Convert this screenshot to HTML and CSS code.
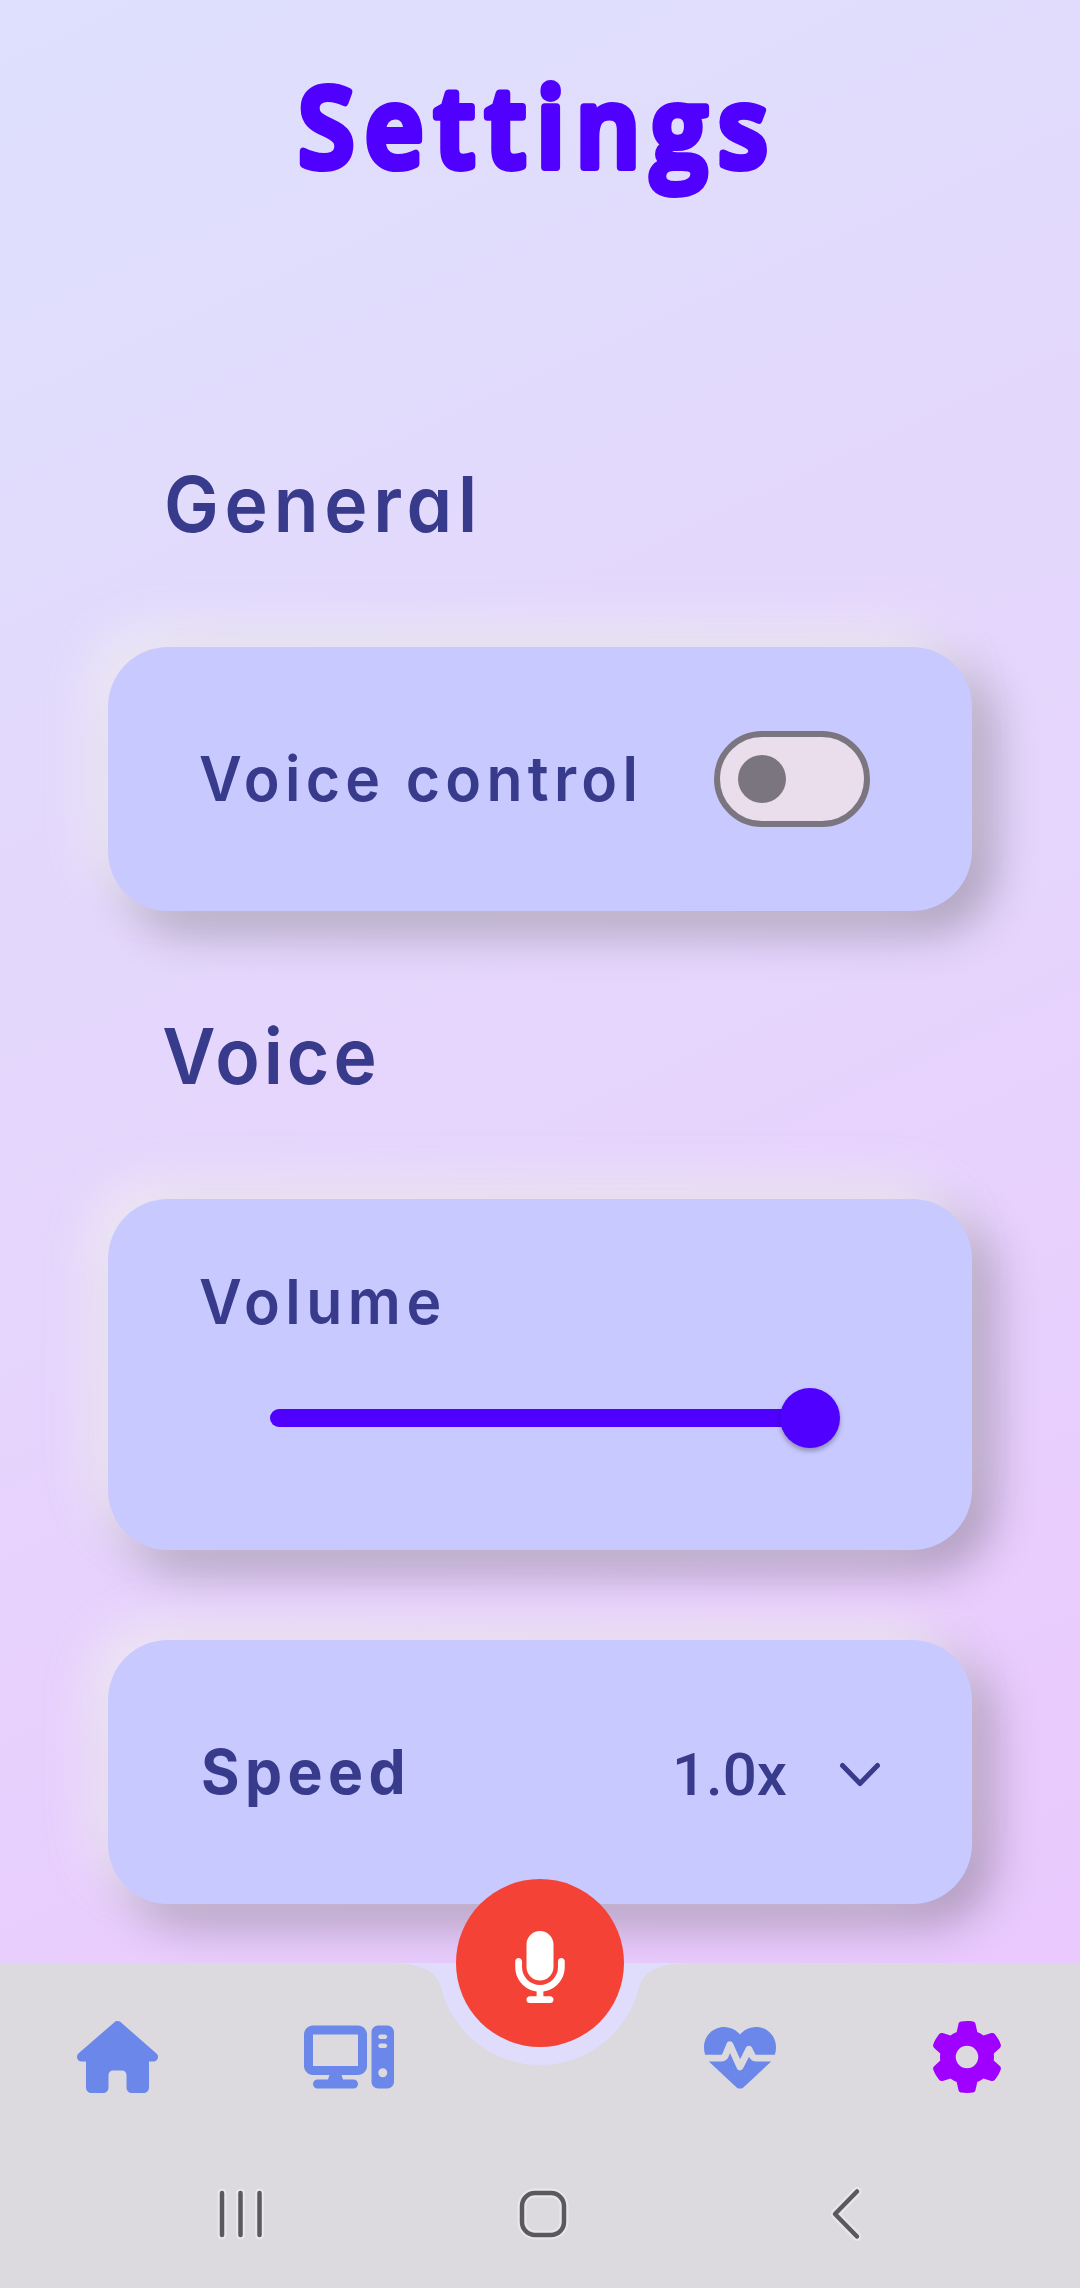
FILE: index.html
```html
<!DOCTYPE html>
<html lang="en">
<head>
<meta charset="utf-8">
<title>Settings</title>
<link rel="stylesheet" href="styles.css">
</head>
<body>
<div class="screen">
  <main class="content">
    <h1 class="title">
      <svg class="title-art" width="520" height="190" viewBox="0 0 520 190"><text class="title-text" x="20" y="147" transform="scale(.92 1)">Settings</text></svg>
    </h1>

    <h2 class="section general">General</h2>
    <section class="card row">
      <span class="label control-label">Voice control</span>
      <span class="switch" role="switch" aria-checked="false"><span class="switch-thumb"></span></span>
    </section>

    <h2 class="section voice">Voice</h2>
    <section class="card volume">
      <span class="label volume-label">Volume</span>
      <div class="slider"><span class="slider-thumb"></span></div>
    </section>
    <section class="card row speed">
      <span class="label speed-label">Speed</span>
      <span class="select">
        <span class="select-value">1.0x</span>
        <svg width="48" height="36" viewBox="0 0 48 36"><path d="M6.500 8.500L24 26.500L41.500 8.500" fill="none" stroke="#383b8b" stroke-width="5" stroke-linecap="round" stroke-linejoin="round"/></svg>
      </span>
    </section>
  </main>

  <nav class="tabs">
    <svg class="tabs-shape" width="1080" height="325" viewBox="0 0 1080 325"><path fill="#dcd9df" d="M0 0H390Q435 0 440.900 24.200A102 102 0 0 0 639.100 24.200Q645 0 690 0H1080V325H0Z"/></svg>
    <button class="mic" aria-label="Microphone">
      <svg width="54" height="72" viewBox="0 0 384 512"><path fill="#fff" d="M192 0C139 0 96 43 96 96V256c0 53 43 96 96 96s96-43 96-96V96c0-53-43-96-96-96zM64 216c0-13.300-10.700-24-24-24s-24 10.700-24 24v40c0 89.100 66.200 162.700 152 174.400V464H120c-13.300 0-24 10.700-24 24s10.700 24 24 24h144c13.300 0 24-10.700 24-24s-10.700-24-24-24H216V430.400c85.800-11.700 152-85.300 152-174.400V216c0-13.300-10.700-24-24-24s-24 10.700-24 24v40c0 70.700-57.300 128-128 128s-128-57.300-128-128V216z"/></svg>
    </button>
    <div class="tab-row">
      <svg class="tab home" width="81" height="72" viewBox="0 0 576 512"><path d="M575.8 255.5c0 18-15 32.100-32 32.100h-32l.7 160.200c0 2.700-.2 5.400-.5 8.100V472c0 22.100-17.900 40-40 40H392c-22.100 0-40-17.900-40-40V384c0-17.700-14.300-32-32-32H256c-17.700 0-32 14.300-32 32v88c0 22.100-17.900 40-40 40H104c-22.100 0-40-17.900-40-40V287.600H32c-18 0-32-14-32-32.100c0-9 3-17 10-24L266.400 8c7-7 15-8 22-8s15 2 21 7L564.800 231.500c8 7 12 15 11 24z"/></svg>
      <svg class="tab computer" width="90" height="72" viewBox="0 0 640 512"><path d="M384 96V320H64L64 96H384zM64 32C28.700 32 0 60.700 0 96V320c0 35.300 28.700 64 64 64H181.300l-10.700 32H96c-17.700 0-32 14.300-32 32s14.300 32 32 32H352c17.700 0 32-14.300 32-32s-14.300-32-32-32H277.300l-10.700-32H384c35.300 0 64-28.700 64-64V96c0-35.300-28.700-64-64-64H64zm464 0c-26.500 0-48 21.500-48 48V432c0 26.500 21.500 48 48 48h64c26.500 0 48-21.500 48-48V80c0-26.500-21.500-48-48-48H528zm16 64h32c8.800 0 16 7.200 16 16s-7.200 16-16 16H544c-8.800 0-16-7.200-16-16s7.200-16 16-16zm-16 80c0-8.800 7.200-16 16-16h32c8.800 0 16 7.200 16 16s-7.200 16-16 16H544c-8.800 0-16-7.200-16-16zm32 160a32 32 0 1 1 0 64 32 32 0 1 1 0-64z"/></svg>
      <svg class="tab health" width="72" height="72" viewBox="0 0 512 512"><path d="M228.300 469.100L47.600 300.400c-4.200-3.900-8.200-8.100-11.900-12.400h87c22.600 0 43-13.600 51.700-34.500l10.500-25.200 49.300 109.500c3.800 8.500 12.100 14 21.400 14.100s17.800-5 22-13.300L320 253.700l1.700 3.400c9.500 19 28.900 31 50.100 31H476.300c-3.700 4.300-7.700 8.500-11.900 12.400L283.700 469.100c-7.500 7-17.400 10.900-27.700 10.900s-20.200-3.900-27.700-10.900zM503.700 240h-132c-3 0-5.800-1.700-7.200-4.400l-23.200-46.300c-4.100-8.100-12.400-13.300-21.500-13.300s-17.400 5.100-21.500 13.300l-41.400 82.800L205.900 158.200c-3.900-8.700-12.700-14.300-22.200-14.100s-18.100 5.900-21.800 14.800l-31.800 76.300c-1.200 3-4.200 4.900-7.400 4.900H16c-2.600 0-5 .4-7.300 1.100C3 225.200 0 208.200 0 190.900v-5.800c0-69.900 50.500-129.500 119.400-141C165 36.500 211.400 51.400 244 84l12 12 12-12c32.600-32.600 79-47.500 124.600-39.900C461.500 55.600 512 115.200 512 185.100v5.800c0 16.900-2.800 33.500-8.300 49.100z"/></svg>
      <svg class="tab gear" width="72" height="72" viewBox="0 0 512 512"><path d="M495.900 166.600c3.200 8.700 .5 18.400-6.400 24.600l-43.300 39.400c1.100 8.300 1.700 16.800 1.700 25.400s-.6 17.100-1.700 25.400l43.300 39.400c6.900 6.200 9.600 15.900 6.400 24.600c-4.400 11.900-9.700 23.300-15.800 34.300l-4.700 8.100c-6.600 11-14 21.400-22.100 31.200c-5.900 7.200-15.700 9.600-24.500 6.800l-55.700-17.700c-13.400 10.300-28.200 18.900-44 25.400l-12.500 57.100c-2 9.100-9 16.300-18.200 17.800c-13.800 2.300-28 3.500-42.500 3.500s-28.700-1.200-42.500-3.500c-9.200-1.500-16.200-8.700-18.200-17.800l-12.500-57.100c-15.800-6.500-30.600-15.100-44-25.400L83.100 425.900c-8.800 2.800-18.600 .3-24.500-6.800c-8.100-9.800-15.500-20.200-22.100-31.200l-4.700-8.100c-6.100-11-11.400-22.400-15.800-34.300c-3.200-8.700-.5-18.400 6.400-24.600l43.300-39.400C64.600 273.100 64 264.600 64 256s.6-17.100 1.700-25.400L22.400 191.200c-6.900-6.200-9.600-15.900-6.400-24.600c4.400-11.900 9.700-23.300 15.800-34.300l4.700-8.100c6.600-11 14-21.400 22.100-31.200c5.900-7.200 15.700-9.600 24.500-6.800l55.700 17.700c13.400-10.300 28.200-18.900 44-25.400l12.500-57.100c2-9.100 9-16.300 18.200-17.800C227.300 1.200 241.500 0 256 0s28.700 1.200 42.500 3.500c9.200 1.500 16.200 8.700 18.200 17.800l12.500 57.100c15.800 6.500 30.600 15.100 44 25.400l55.700-17.700c8.800-2.800 18.600-.3 24.500 6.800c8.100 9.800 15.500 20.200 22.100 31.200l4.700 8.100c6.100 11 11.400 22.400 15.800 34.300zM256 336a80 80 0 1 0 0-160 80 80 0 1 0 0 160z"/></svg>
    </div>
    <div class="system-row">
      <svg width="52" height="56" viewBox="0 0 52 56"><g class="halo"><path d="M7 7V49M25.500 7V49M44.500 7V49"/></g><g class="line"><path d="M7 7V49M25.500 7V49M44.500 7V49"/></g></svg>
      <svg width="56" height="56" viewBox="0 0 56 56"><g class="halo"><rect x="7" y="7" width="42" height="42" rx="13"/></g><g class="line"><rect x="7" y="7" width="42" height="42" rx="13"/></g></svg>
      <svg width="38" height="56" viewBox="0 0 38 56"><g class="halo"><path d="M29 5.500L7 28L29 50.500"/></g><g class="line"><path d="M29 5.500L7 28L29 50.500"/></g></svg>
    </div>
  </nav>
</div>
</body>
</html>
```

FILE: styles.css
```css
* { box-sizing: border-box; }
body { margin: 0; }
.screen {
  width: 1080px;
  height: 2288px;
  display: flex;
  flex-direction: column;
  overflow: hidden;
  background: #e0dcfc;
  font-family: Inter, "Noto Sans", sans-serif;
  color: #383b8b;
}
.content {
  height: 1963px;
  flex: none;
  padding: 20px 108px 0;
  background: linear-gradient(155deg, #dee0fd 0%, #e5d6fc 48%, #eac9fe 100%);
  overflow: hidden;
}
.title { margin: 0; height: 190px; text-align: center; font-size: 0; }
.title-art { overflow: visible; }
.title-text {
  font: 600 110px "Open Sans", sans-serif;
  letter-spacing: 12px;
  fill: #5000ff;
  stroke: #5000ff;
  stroke-width: 8;
  stroke-linejoin: round;
}
.section {
  margin: 0;
  padding-left: 56px;
  font-size: 77px;
  line-height: 96px;
  font-weight: 600;
  font-feature-settings: "cv11";
  transform: scaleX(.95);
  transform-origin: 56px 50%;
}
.general { margin-top: 246px; letter-spacing: 6.1px; }
.voice { margin-top: 97px; letter-spacing: 4.2px; transform-origin: 20px 50%; }
.card {
  height: 264px;
  border-radius: 60px;
  background: #c8c9ff;
  box-shadow: -15px -15px 51px rgba(242, 239, 243, .85), 18px 18px 48px rgba(0, 0, 0, .29);
}
.general + .card { margin-top: 95px; }
.row { display: flex; align-items: center; justify-content: space-between; padding: 0 102px 0 91px; }
.label {
  align-self: flex-start;
  font-size: 62px;
  line-height: 76px;
  font-weight: 600;
  letter-spacing: 5.6px;
  white-space: nowrap;
  transform: scaleX(.95);
  transform-origin: 0 50%;
}
.row .label { align-self: center; }
.switch {
  width: 156px; height: 96px;
  display: flex; align-items: center;
  padding-left: 18px;
  border: 6px solid #7b7580;
  border-radius: 48px;
  background: #eadeec;
  flex: none;
}
.control-label { width: 500px; }
.switch-thumb { width: 48px; height: 48px; border-radius: 50%; background: #7b7580; }
.volume { height: 351px; margin-top: 95px; padding: 65px 0 0 91px; display: flex; flex-direction: column; }
.volume-label { letter-spacing: 5.8px; }
.slider {
  width: 540px; height: 18px;
  margin: 69px 0 0 71px;
  border-radius: 9px;
  background: #5000ff;
  display: flex; align-items: center; justify-content: flex-end;
}
.slider-thumb {
  width: 60px; height: 60px; flex: none;
  margin-right: -30px;
  border-radius: 50%;
  background: #5000ff;
  box-shadow: 0 3px 5px rgba(0, 0, 0, .3);
}
.speed { margin-top: 90px; padding: 0 88px 0 93px; }
.speed-label { letter-spacing: 5.7px; font-weight: 650; }
.select { display: flex; align-items: center; gap: 49px; padding-top: 6px; }
.select-value { font: 500 60px/72px Roboto, sans-serif; }
.tabs { position: relative; height: 325px; padding-top: 58px; }
.tabs-shape { position: absolute; left: 0; top: 0; }
.mic {
  position: absolute; left: 456px; top: -84px;
  width: 168px; height: 168px;
  display: flex; align-items: center; justify-content: center;
  padding: 8px 0 0;
  border: 0; border-radius: 50%;
  background: #f44336;
}
.tab-row, .system-row { position: relative; display: flex; align-items: center; }
.tab { fill: #6b87ea; }
.home { margin-left: 77px; }
.computer { margin-left: 146px; }
.health { margin-left: 310px; }
.gear { margin-left: 154.5px; fill: #a000ff; }
.system-row { margin-top: 93px; padding-left: 215px; }
.system-row svg:nth-child(2) { margin-left: 248px; }
.system-row svg:nth-child(3) { margin-left: 257px; }
.halo, .line { fill: none; stroke-linecap: round; stroke-linejoin: round; }
.halo { stroke: #e8e6eb; stroke-width: 9; }
.line { stroke: #5a5a5c; stroke-width: 4.5; }
```
